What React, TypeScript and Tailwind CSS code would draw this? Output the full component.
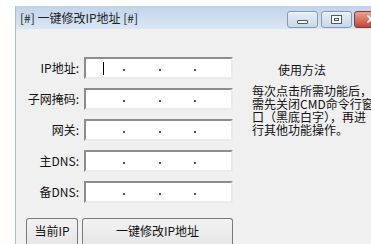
import { X } from "lucide-react";

const fields = ["IP地址:", "子网掩码:", "网关:", "主DNS:", "备DNS:"];

const cjk = "font-['Noto_Sans_CJK_SC','Noto_Sans',sans-serif]";

// sunken Win32 edit box holding an IP address (three dots)
function IpBox({ caret }: { caret?: boolean }) {
  return (
    <div className="flex h-[22px] w-[149px] items-center border-2 border-t-[#8d8d8d] border-l-[#8d8d8d] border-b-[#ebebeb] border-r-[#ebebeb] bg-white">
      <div className="flex w-[18px] justify-end">
        {caret && <span className="block h-[13px] w-px bg-black" />}
      </div>
      <span className="ml-[19px] h-[2px] w-[2px] translate-y-[2px] bg-[#555]" />
      <span className="ml-[34px] h-[2px] w-[2px] translate-y-[2px] bg-[#555]" />
      <span className="ml-[33px] h-[2px] w-[2px] translate-y-[2px] bg-[#555]" />
    </div>
  );
}

function CaptionButton({ kind }: { kind: "min" | "max" }) {
  return (
    <div className="flex h-[17px] w-[31px] shrink-0 items-center justify-center rounded-[3px] border border-[#8499b6] bg-gradient-to-b from-[#e6eef8] to-[#c8d8ec] shadow-[inset_0_1px_0_#f5f9fd]">
      {kind === "min" ? (
        <span className="mt-[5px] block h-[4px] w-[11px] rounded-[1px] border border-[#4a5a74] bg-white" />
      ) : (
        <span className="flex h-[9px] w-[11px] items-center justify-center border border-[#4a5a74] bg-white">
          <span className="block h-[3px] w-[5px] border border-[#4a5a74]" />
        </span>
      )}
    </div>
  );
}

export default function App() {
  return (
    <div className={`h-[244px] w-[371px] overflow-hidden bg-white pl-[15px] pt-[6px] ${cjk}`}>
      <div className="h-full border-l border-[#a9bfdc] bg-[#f0f0f0]">
        {/* title bar */}
        <div className="flex h-[23px] items-center bg-gradient-to-b from-[#c1d4ec] to-[#dae6f4] pl-[4px]">
          <span className="text-[12px] leading-none text-[#222]">[#] 一键修改IP地址 [#]</span>
          <div className="-mr-[23px] ml-auto flex shrink-0 items-center pt-[3px]">
            <CaptionButton kind="min" />
            <div className="ml-[3px]">
              <CaptionButton kind="max" />
            </div>
            <div className="ml-[2px] flex h-[17px] w-[40px] shrink-0 items-center rounded-[3px] border border-[#8a3a30] bg-gradient-to-b from-[#e8a092] to-[#c4453a] pl-[10px]">
              <X className="h-[12px] w-[12px] text-white" strokeWidth={3.5} />
            </div>
          </div>
        </div>

        {/* body */}
        <div className="flex pt-[28px]">
          <div className="flex flex-col">
            <div className="flex flex-col gap-[9px]">
              {fields.map((f, i) => (
                <div key={f} className="flex items-center">
                  <span className="w-[63px] text-right text-[12px] leading-none text-[#111]">{f}</span>
                  <div className="ml-[5px]">
                    <IpBox caret={i === 0} />
                  </div>
                </div>
              ))}
            </div>
            <div className="mt-[15px] flex gap-[4px] pl-[10px]">
              <button className="flex h-[30px] w-[52px] items-start justify-center rounded-t-[3px] border border-b-0 border-[#7a7a7a] bg-gradient-to-b from-[#f2f2f2] to-[#e4e4e4] pt-[6px] text-[12px] leading-none text-[#111]">
                当前IP
              </button>
              <button className="flex h-[30px] w-[151px] items-start justify-center rounded-t-[3px] border border-b-0 border-[#7a7a7a] bg-gradient-to-b from-[#f2f2f2] to-[#e4e4e4] pt-[6px] text-[12px] leading-none text-[#111]">
                一键修改IP地址
              </button>
            </div>
          </div>

          <div className="ml-[12px] flex w-[126px] flex-col pt-[7px]">
            <div className="w-[114px] text-center text-[12px] leading-none text-[#111]">使用方法</div>
            <div className="mt-[8px] whitespace-nowrap pl-[7px] text-[12px] leading-[13px] text-[#111]">
              <div>每次点击所需功能后，</div>
              <div>需先关闭CMD命令行窗</div>
              <div>口（黑底白字），再进</div>
              <div>行其他功能操作。</div>
            </div>
          </div>
        </div>
      </div>
    </div>
  );
}
